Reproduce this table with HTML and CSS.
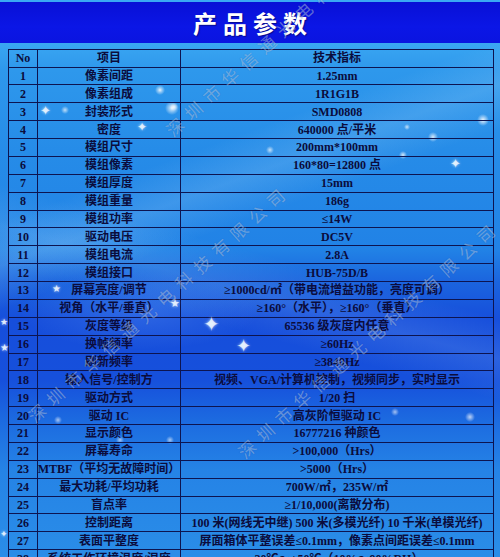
FILE: index.html
```html
<!DOCTYPE html>
<html lang="zh-CN">
<head>
<meta charset="utf-8">
<title>产品参数</title>
<link rel="stylesheet" href="styles.css">
</head>
<body>
<div class="page">
  <header class="topbar"><h1>产品参数</h1></header>
  <div class="spec">
    <div class="row head"><div class="cell">No</div><div class="cell">项目</div><div class="cell">技术指标</div></div>
    <div class="row"><div class="cell">1</div><div class="cell">像素间距</div><div class="cell">1.25mm</div></div>
    <div class="row"><div class="cell">2</div><div class="cell">像素组成</div><div class="cell">1R1G1B</div></div>
    <div class="row"><div class="cell">3</div><div class="cell">封装形式</div><div class="cell">SMD0808</div></div>
    <div class="row"><div class="cell">4</div><div class="cell">密度</div><div class="cell">640000 点/平米</div></div>
    <div class="row"><div class="cell">5</div><div class="cell">模组尺寸</div><div class="cell">200mm*100mm</div></div>
    <div class="row"><div class="cell">6</div><div class="cell">模组像素</div><div class="cell">160*80=12800 点</div></div>
    <div class="row"><div class="cell">7</div><div class="cell">模组厚度</div><div class="cell">15mm</div></div>
    <div class="row"><div class="cell">8</div><div class="cell">模组重量</div><div class="cell">186g</div></div>
    <div class="row"><div class="cell">9</div><div class="cell">模组功率</div><div class="cell">≤14W</div></div>
    <div class="row"><div class="cell">10</div><div class="cell">驱动电压</div><div class="cell">DC5V</div></div>
    <div class="row"><div class="cell">11</div><div class="cell">模组电流</div><div class="cell">2.8A</div></div>
    <div class="row"><div class="cell">12</div><div class="cell">模组接口</div><div class="cell">HUB-75D/B</div></div>
    <div class="row"><div class="cell">13</div><div class="cell">屏幕亮度/调节</div><div class="cell">≥1000cd/㎡（带电流增益功能，亮度可调）</div></div>
    <div class="row"><div class="cell">14</div><div class="cell">视角（水平/垂直）</div><div class="cell">≥160°（水平），≥160°（垂直）</div></div>
    <div class="row"><div class="cell">15</div><div class="cell">灰度等级</div><div class="cell">65536 级灰度内任意</div></div>
    <div class="row"><div class="cell">16</div><div class="cell">换帧频率</div><div class="cell">≥60Hz</div></div>
    <div class="row"><div class="cell">17</div><div class="cell">刷新频率</div><div class="cell">≥3840Hz</div></div>
    <div class="row"><div class="cell">18</div><div class="cell">输入信号/控制方</div><div class="cell">视频、VGA/计算机控制，视频同步，实时显示</div></div>
    <div class="row"><div class="cell">19</div><div class="cell">驱动方式</div><div class="cell">1/20 扫</div></div>
    <div class="row"><div class="cell">20</div><div class="cell">驱动 IC</div><div class="cell">高灰阶恒驱动 IC</div></div>
    <div class="row"><div class="cell">21</div><div class="cell">显示颜色</div><div class="cell">16777216 种颜色</div></div>
    <div class="row"><div class="cell">22</div><div class="cell">屏幕寿命</div><div class="cell">&gt;100,000（Hrs）</div></div>
    <div class="row"><div class="cell">23</div><div class="cell">MTBF（平均无故障时间）</div><div class="cell">&gt;5000（Hrs）</div></div>
    <div class="row"><div class="cell">24</div><div class="cell">最大功耗/平均功耗</div><div class="cell">700W/㎡，235W/㎡</div></div>
    <div class="row"><div class="cell">25</div><div class="cell">盲点率</div><div class="cell">≥1/10,000(离散分布)</div></div>
    <div class="row"><div class="cell">26</div><div class="cell">控制距离</div><div class="cell">100 米(网线无中继) 500 米(多模光纤) 10 千米(单模光纤)</div></div>
    <div class="row"><div class="cell">27</div><div class="cell">表面平整度</div><div class="cell">屏面箱体平整误差≤0.1mm，像素点间距误差≤0.1mm</div></div>
    <div class="row"><div class="cell">28</div><div class="cell">系统工作环境温度/湿度</div><div class="cell">-20℃～+50℃（10%～90%RH）</div></div>
  </div>

  <div class="decor" aria-hidden="true">
    <span class="wm wm-a">深圳市华信通光电科技有限公司</span>
    <span class="wm wm-b">深圳市华信通光电科技有限公司</span>
    <span class="wm wm-c">深圳市华信通光电科技有限公司</span>
    <span class="star s1">✦</span>
    <span class="star s2">✦</span>
    <span class="star s3">★</span>
    <span class="star s4">★</span>
    <span class="star s5">✦</span>
    <span class="star s6">✦</span>
    <span class="star s7">★</span>
    <span class="star s8">✦</span>
    <span class="star s9">★</span>
    <span class="star s10">✦</span>
  </div>
</div>
</body>
</html>
```

FILE: styles.css
```css
* { box-sizing: border-box; }

html, body {
  margin: 0;
  padding: 0;
}

body {
  width: 500px;
  height: 557px;
  overflow: hidden;
  font-family: "Liberation Serif", "Noto Sans CJK SC", serif;
}

.page {
  position: relative;
  width: 500px;
  height: 557px;
  overflow: hidden;
  padding-top: 2px;
  background:
    radial-gradient(circle at 160px 90px, rgba(255,255,255,0.9) 0, rgba(255,255,255,0.5) 2px, rgba(255,255,255,0) 5px),
    radial-gradient(circle at 174px 107px, rgba(255,255,255,0.8) 0, rgba(255,255,255,0) 4px),
    radial-gradient(circle at 172px 108px, rgba(255,255,255,0.9) 0, rgba(255,255,255,0) 7px),
    radial-gradient(circle at 483px 120px, rgba(255,255,255,0.9) 0, rgba(255,255,255,0) 6px),
    radial-gradient(circle at 433px 137px, rgba(255,255,255,0.8) 0, rgba(255,255,255,0) 5px),
    radial-gradient(circle at 403px 155px, rgba(255,255,255,0.8) 0, rgba(255,255,255,0) 4px),
    radial-gradient(circle at 270px 150px, rgba(255,255,255,0.7) 0, rgba(255,255,255,0) 4px),
    radial-gradient(circle at 407px 127px, rgba(255,255,255,0.7) 0, rgba(255,255,255,0) 3px),
    radial-gradient(circle at 65px 110px, rgba(255,255,255,0.7) 0, rgba(255,255,255,0) 4px),
    radial-gradient(circle at 470px 417px, rgba(255,255,255,0.7) 0, rgba(255,255,255,0) 5px),
    radial-gradient(circle at 395px 412px, rgba(255,255,255,0.6) 0, rgba(255,255,255,0) 4px),
    radial-gradient(circle at 120px 440px, rgba(255,255,255,0.6) 0, rgba(255,255,255,0) 4px),
    radial-gradient(circle at 170px 440px, rgba(255,255,255,0.6) 0, rgba(255,255,255,0) 4px),
    radial-gradient(circle at 58px 420px, rgba(255,255,255,0.6) 0, rgba(255,255,255,0) 4px),
    radial-gradient(ellipse 120px 40px at 140px 310px, rgba(120,180,255,0.25), rgba(120,180,255,0)),
    linear-gradient(160deg, rgba(255,255,255,0) 30%, rgba(200,235,255,0.16) 36%, rgba(255,255,255,0) 42%),
    linear-gradient(195deg, rgba(255,255,255,0) 46%, rgba(200,235,255,0.12) 52%, rgba(255,255,255,0) 58%),
    linear-gradient(to bottom,
      #3aa8f4 0, #3aa8f4 2px,
      #0a12e0 2px, #0a12e0 43px,
      #3aa6f2 43px, #2e98ec 70px,
      #268ce8 150px, #2182e6 250px,
      #1b64de 282px, #164edb 320px,
      #1650dc 380px, #1c6ae0 420px,
      #2583e6 470px, #2a8de8 557px);
}

.topbar {
  height: 41px;
  background: linear-gradient(to bottom, #0810d6, #0b16e6 60%, #0a14e0);
  display: flex;
  align-items: center;
  justify-content: center;
}

.topbar h1 {
  margin: 0;
  padding-left: 6px;
  font-family: "Noto Sans CJK SC", sans-serif;
  font-weight: 700;
  font-size: 24px;
  line-height: 1;
  letter-spacing: 6px;
  color: #ffffff;
  text-shadow: 1px 1px 1px rgba(0, 0, 60, 0.5);
}

.spec {
  margin: 6px 0 0 8px;
  width: 486px;
  border: 1px solid #0d1450;
  border-bottom: none;
  position: relative;
  z-index: 1;
}

.row {
  display: grid;
  grid-template-columns: 29px 143px 1fr;
  height: 17.875px;
  border-bottom: 1px solid #0d1450;
}

.row.head {
  height: 17.5px;
}

.cell {
  display: flex;
  align-items: center;
  justify-content: center;
  white-space: nowrap;
  overflow: hidden;
  border-right: 1px solid #0d1450;
  font-size: 12px;
  line-height: 1;
  font-weight: 700;
  color: #0b0c3c;
}

.cell:last-child {
  border-right: none;
}

.decor {
  position: absolute;
  left: 0;
  top: 0;
  width: 500px;
  height: 557px;
  pointer-events: none;
  z-index: 2;
}

.wm {
  position: absolute;
  font-family: "Noto Sans CJK SC", sans-serif;
  font-size: 17px;
  line-height: 17px;
  letter-spacing: 7.7px;
  white-space: nowrap;
  color: rgba(235, 245, 255, 0.38);
  text-shadow: 0 0 1px rgba(0, 40, 120, 0.3);
  transform-origin: 8.5px 8.5px;
  transform: rotate(-42deg);
}

.wm-a { left: 166px; top: 118px; }
.wm-b { left: 28px; top: 404px; }
.wm-c { left: 238px; top: 440px; }

.star {
  position: absolute;
  color: rgba(235, 245, 255, 0.9);
  line-height: 1;
  font-family: "DejaVu Sans", sans-serif;
  text-shadow: 0 0 3px rgba(255, 255, 255, 0.8);
}

.s1 { left: 40px; top: 104px; font-size: 13px; }
.s2 { left: 137px; top: 121px; font-size: 12px; }
.s3 { left: 52px; top: 284px; font-size: 10px; }
.s4 { left: 170px; top: 298px; font-size: 11px; }
.s5 { left: 203px; top: 314px; font-size: 20px; }
.s6 { left: 236px; top: 337px; font-size: 18px; }
.s7 { left: 0px; top: 343px; font-size: 10px; }
.s8 { left: 450px; top: 157px; font-size: 13px; }
.s9 { left: 0px; top: 318px; font-size: 9px; }
.s10 { left: 0px; top: 530px; font-size: 9px; }
```
